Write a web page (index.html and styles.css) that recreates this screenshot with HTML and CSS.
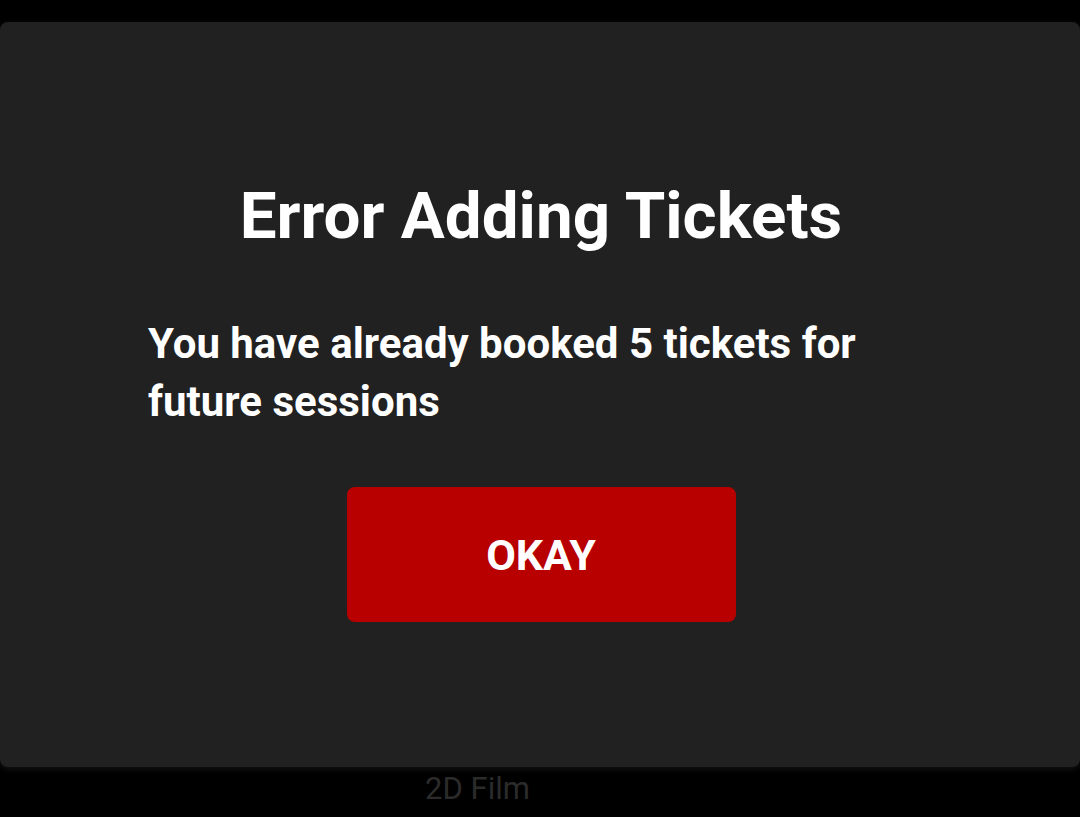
FILE: index.html
```html
<!DOCTYPE html>
<html>
<head>
<meta charset="utf-8">
<link rel="stylesheet" href="styles.css">
</head>
<body>
<div class="dialog">
  <h1 class="title">Error Adding Tickets</h1>
  <p class="message">You have already booked 5 tickets for future sessions</p>
  <div class="actions">
    <button class="okay">OKAY</button>
  </div>
</div>
<div class="under">2D Film</div>
</body>
</html>
```
FILE: styles.css
```css
html, body {
  margin: 0;
  padding: 0;
  background: #000;
  width: 1080px;
  height: 817px;
  overflow: hidden;
  font-family: Roboto, "Liberation Sans", sans-serif;
}
.dialog {
  margin-top: 22px;
  height: 745px;
  box-sizing: border-box;
  background: #212121;
  border-radius: 8px;
  padding: 156px 148px 0;
  display: flex;
  flex-direction: column;
  box-shadow: 0 2px 6px rgba(40,40,40,0.5);
}
.title {
  margin: 0;
  text-align: center;
  color: #fff;
  font-size: 65.5px;
  line-height: 76px;
  font-weight: 700;
  padding-left: 2px;
}
.message {
  margin: 61px 0 0;
  color: #fff;
  font-size: 42px;
  line-height: 58px;
  font-weight: 700;
}
.actions {
  display: flex;
  justify-content: center;
  margin-top: 56px;
  padding-left: 2px;
}
.okay {
  width: 389px;
  height: 135px;
  border: none;
  border-radius: 8px;
  background: #b80000;
  color: #fff;
  font-family: Roboto, "Liberation Sans", sans-serif;
  font-size: 43px;
  font-weight: 700;
  padding: 0;
}
.under {
  text-align: center;
  color: #2b2b2b;
  font-size: 31px;
  line-height: 40px;
  margin-top: 2px;
  padding-right: 125px;
}
```
